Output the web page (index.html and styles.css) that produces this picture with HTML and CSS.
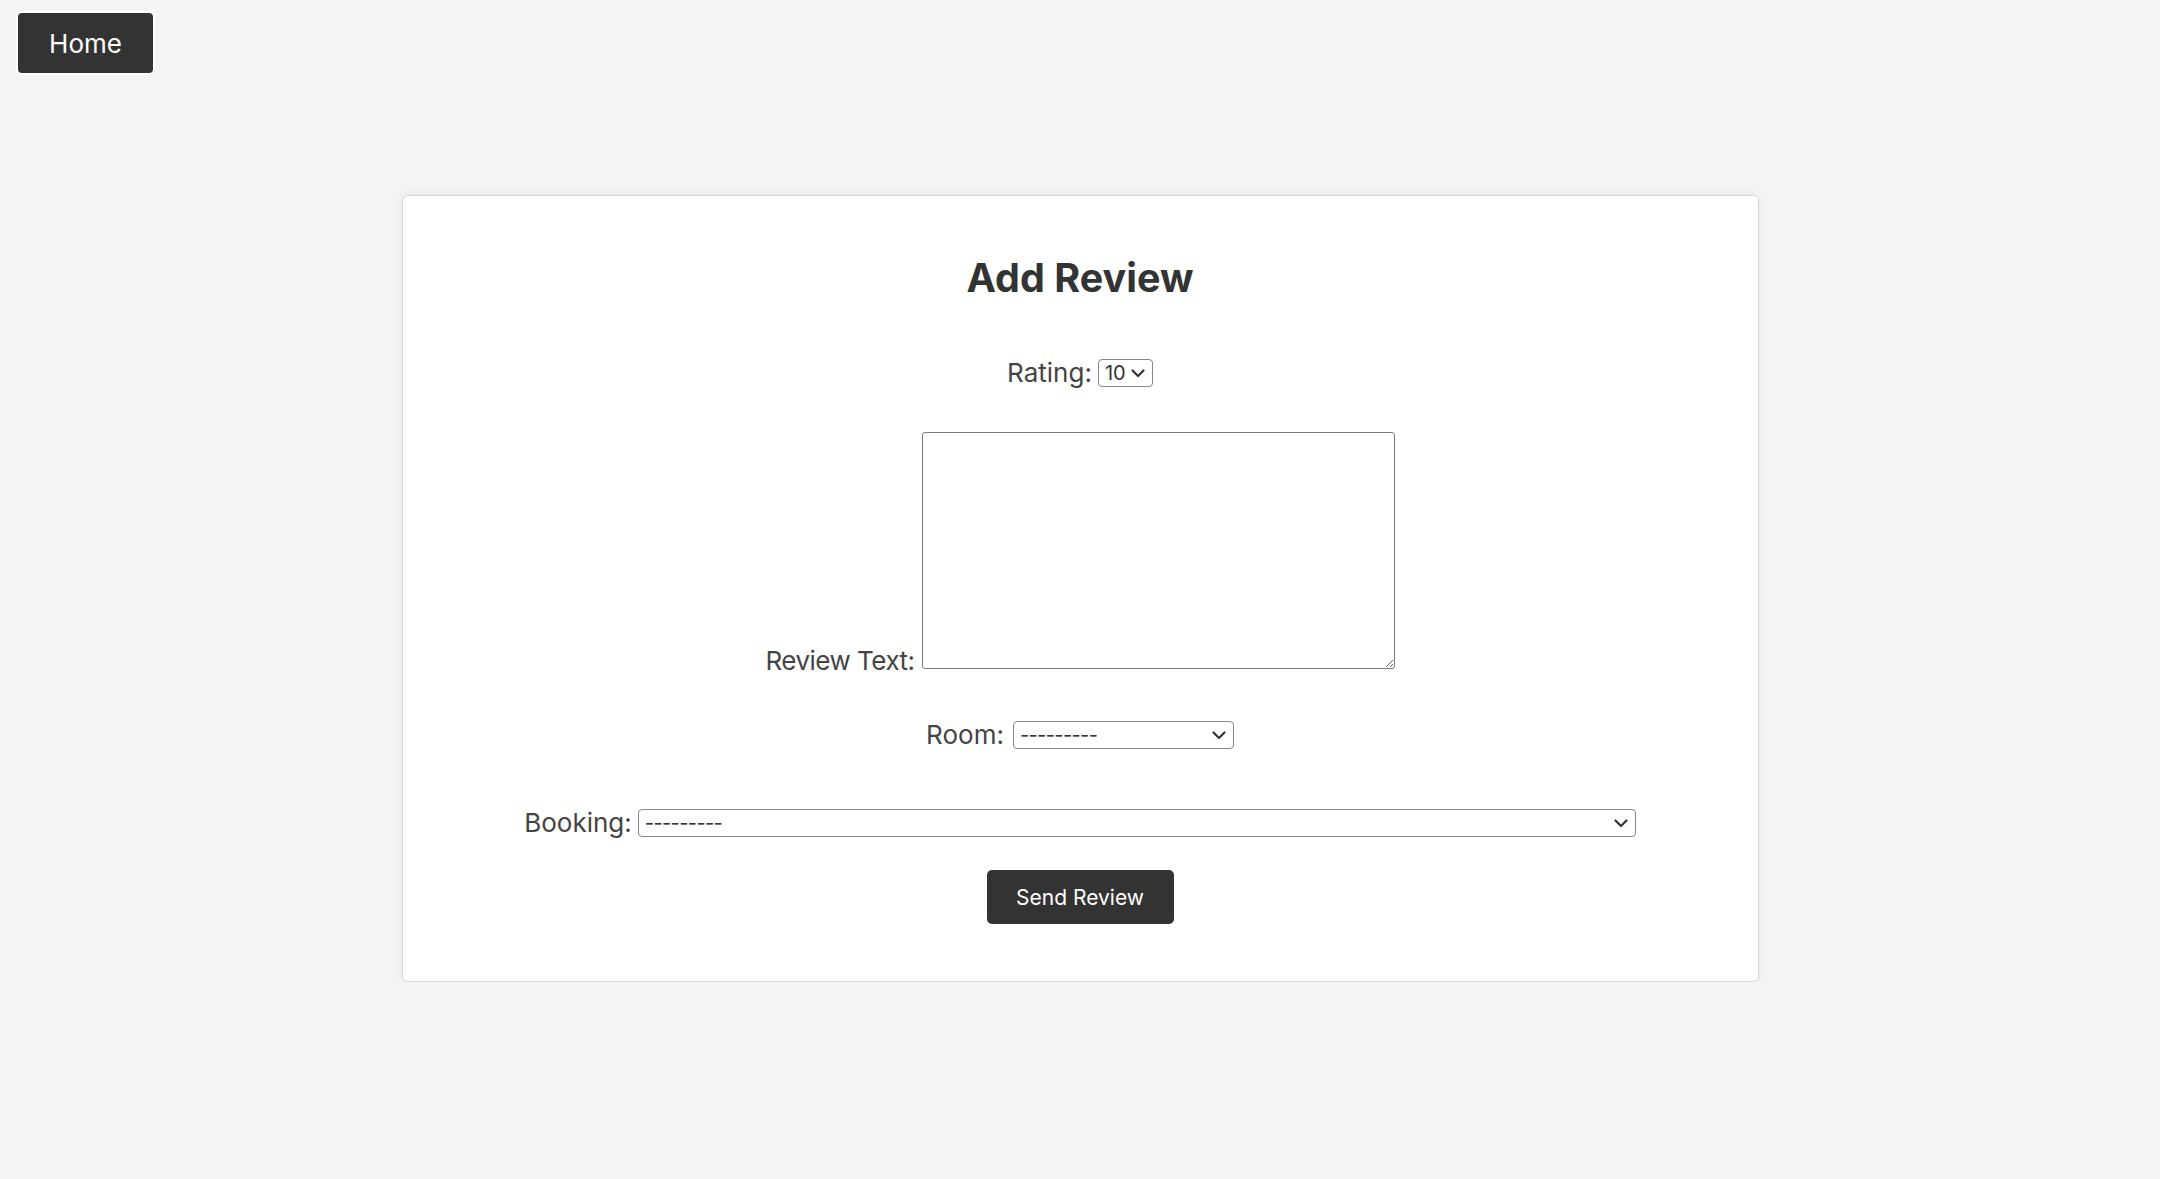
FILE: index.html
```html
<!DOCTYPE html>
<html lang="en">
<head>
<meta charset="utf-8">
<title>Add Review</title>
<link rel="stylesheet" href="styles.css">
</head>
<body>
<nav class="topnav">
  <button class="home-btn" type="button">Home</button>
</nav>
<main class="card">
  <h2 class="title">Add Review</h2>
  <form class="review-form">
    <div class="row row-rating">
      <label class="lbl" for="rating">Rating:</label>
      <select id="rating" class="sel sel-rating">
        <option>1</option><option>2</option><option>3</option><option>4</option><option>5</option>
        <option>6</option><option>7</option><option>8</option><option>9</option>
        <option selected>10</option>
      </select>
    </div>
    <div class="row row-text">
      <label class="lbl lbl-text" for="text">Review Text:</label>
      <textarea id="text" class="txt"></textarea>
    </div>
    <div class="row row-room">
      <label class="lbl" for="room">Room:</label>
      <select id="room" class="sel sel-room"><option selected>---------</option></select>
    </div>
    <div class="row row-booking">
      <label class="lbl" for="booking">Booking:</label>
      <select id="booking" class="sel sel-booking"><option selected>---------</option></select>
    </div>
    <div class="row row-submit">
      <button class="send-btn" type="button">Send Review</button>
    </div>
  </form>
</main>
</body>
</html>
```

FILE: styles.css
```css
html, body {
  margin: 0;
  padding: 0;
}
body {
  background: #f4f4f4;
  font-family: Inter, "Open Sans", sans-serif;
  color: #333;
}
.topnav {
  display: flex;
  padding: 11px 0 0 16px;
}
.home-btn {
  box-sizing: border-box;
  width: 139px;
  height: 64px;
  background: #333;
  color: #fff;
  border: 2px solid #fff;
  border-radius: 6px;
  font-family: inherit;
  font-size: 26px;
  padding: 0;
}
.card {
  box-sizing: border-box;
  width: 1357px;
  margin: 120px auto 0;
  background: #fff;
  border: 1px solid #d8d8d8;
  border-radius: 6px;
  box-shadow: 0 0 10px rgba(0, 0, 0, 0.07);
  padding: 58px 0 57px;
  display: flex;
  flex-direction: column;
  align-items: center;
}
.title {
  margin: 0;
  font-size: 39.5px;
  line-height: 48px;
  font-weight: 700;
  color: #333;
}
.review-form {
  display: flex;
  flex-direction: column;
  align-items: center;
  width: 100%;
}
.row {
  display: flex;
  align-items: center;
  justify-content: center;
  gap: 6px;
}
.lbl {
  font-size: 26px;
  line-height: 28px;
  color: #444;
}
.row-rating { margin-top: 57px; }
.row-text {
  margin-top: 45px;
  align-items: flex-end;
  gap: 7px;
}
.lbl-text {
  line-height: 26px;
  margin-bottom: -5px;
  letter-spacing: -0.5px;
}
.row-room { margin-top: 52px; gap: 9px; }
.row-booking { margin-top: 60px; }
.row-submit { margin-top: 33px; }
.sel {
  box-sizing: border-box;
  height: 28px;
  margin: 0;
  padding: 0 24px 0 6px;
  font-family: inherit;
  font-size: 20px;
  color: #333;
  background-color: #fff;
  border: 1px solid #858585;
  border-radius: 4px;
  -webkit-appearance: none;
  appearance: none;
  background-image: url("data:image/svg+xml;utf8,<svg xmlns='http://www.w3.org/2000/svg' width='14' height='9' viewBox='0 0 14 9'><path d='M1.5 1.5 L7 7 L12.5 1.5' fill='none' stroke='%23333' stroke-width='2.2' stroke-linecap='round' stroke-linejoin='round'/></svg>");
  background-repeat: no-repeat;
  background-position: right 7px center;
  background-size: 14px 9px;
}
.sel-room, .sel-booking { letter-spacing: -0.6px; }
.sel-rating { width: 55px; }
.sel-room { width: 221px; }
.sel-booking { width: 998px; }
.txt {
  box-sizing: border-box;
  width: 473px;
  height: 237px;
  margin: 0;
  border: 1px solid #7a7a7a;
  border-radius: 3px;
  font-family: inherit;
}
.send-btn {
  width: 187px;
  height: 54px;
  background: #333;
  color: #fff;
  border: none;
  border-radius: 5px;
  font-family: inherit;
  font-size: 21px;
}
```
